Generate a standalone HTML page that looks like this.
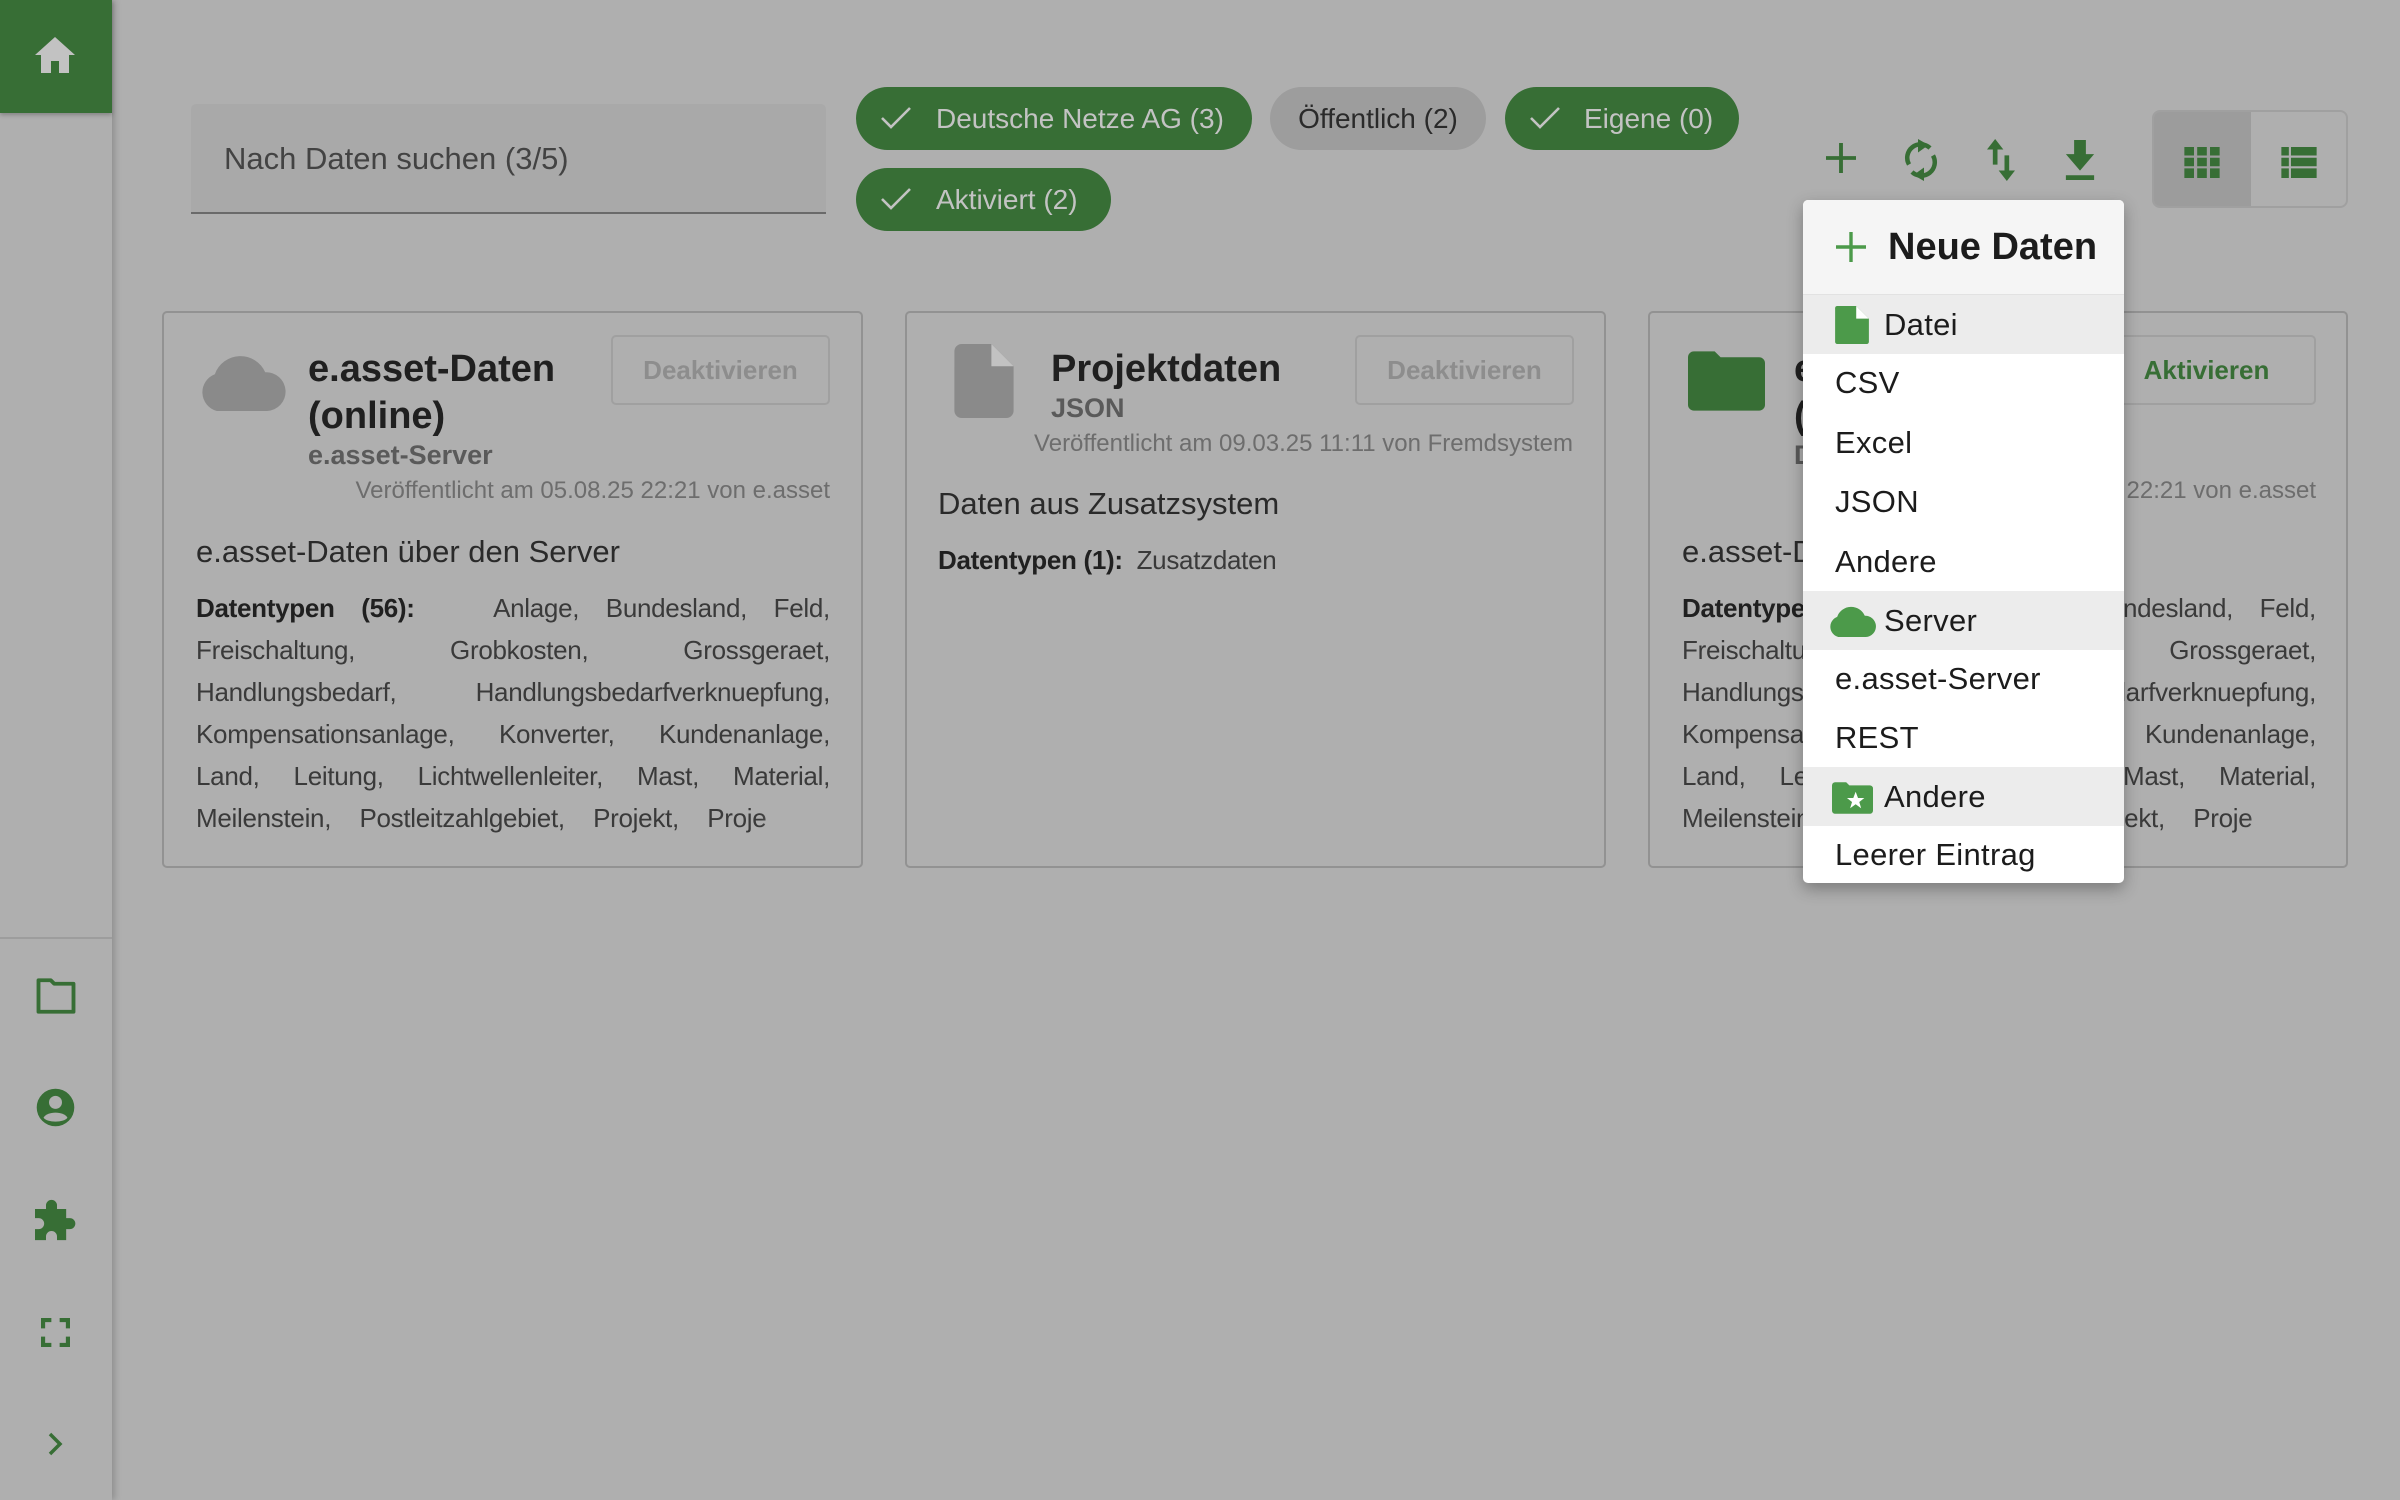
<!DOCTYPE html>
<html><head><meta charset="utf-8"><style>
*{margin:0;padding:0;box-sizing:border-box}
body{width:2400px;height:1500px;background:#afafaf;font-family:"Liberation Sans",sans-serif;position:relative;overflow:hidden;color:#1f1f1f}
.a{position:absolute}
.side{left:0;top:0;width:112px;height:1500px;background:#afafaf;box-shadow:3px 0 6px rgba(0,0,0,.18)}
.chip{position:absolute;height:63px;border-radius:32px;font-size:28px;line-height:63px;white-space:nowrap}
.g{background:#376e35;color:#c3c3c3}
.card{position:absolute;top:311px;height:557px;border:2px solid #929292;border-radius:5px}
.btn{position:absolute;border:2px solid #a0a0a0;border-radius:5px;font-size:26px;font-weight:bold;text-align:center;line-height:66px;height:70px;color:#8d8d8d}
.ttl{font-size:38px;font-weight:bold;color:#202020;line-height:47px}
.sub{font-size:27px;font-weight:bold;color:#5a5a5a}
.pub{font-size:24px;color:#6d6d6d;text-align:right;white-space:nowrap}
.desc{font-size:31px;color:#2a2a2a;white-space:nowrap}
.types{font-size:26px;color:#3a3a3a;line-height:42px;overflow:hidden;letter-spacing:-0.3px}
.types div{text-align:justify;text-align-last:justify;white-space:nowrap}
.menu{left:1803px;top:200px;width:321px;height:683px;background:#fff;border-radius:5px;box-shadow:0 6px 16px rgba(0,0,0,.3);overflow:hidden}
.mi{position:absolute;left:0;width:321px;height:59px;font-size:31px;line-height:59px;padding-left:32px;color:#1c1c1c;letter-spacing:0.3px}
.hl{background:#ececec;padding-left:81px}
</style></head><body>
<div class="a side"></div>
<div class="a" style="left:0;top:0;width:112px;height:113px;background:#376e35;box-shadow:0 2px 4px rgba(0,0,0,.25)">
<svg class="a" style="left:35px;top:37px" width="40" height="36" viewBox="0 0 20 18"><path d="M10 0 L20 9 H17 V18 H12 V12 H8 V18 H3 V9 H0 Z" fill="#c2c2c2"/></svg></div>
<div class="a" style="left:0;top:937px;width:112px;height:2px;background:#9d9d9d"></div>
<svg class="a" style="left:35px;top:978px" width="42" height="36" viewBox="0 0 24 20"><path d="M2 1 H9 L11 3 H22 V19 H2 Z" fill="none" stroke="#376e35" stroke-width="2.2" stroke-linejoin="round"/></svg>
<svg class="a" style="left:35px;top:1087px" width="41" height="41" viewBox="0 0 24 24"><circle cx="12" cy="12" r="11" fill="#376e35"/><circle cx="12" cy="9" r="3.8" fill="#afafaf"/><path d="M5 18 C7 14 17 14 19 18 C17 21 7 21 5 18Z" fill="#afafaf"/></svg>
<svg class="a" style="left:35px;top:1198px" width="44" height="44" viewBox="0 0 24 24"><path d="M0 6 H6 V4 A3 3 0 0 1 12 4 V6 H17 V11 H19 A2.8 2.8 0 0 1 19 17 H17 V23 H12 V21 A3 3 0 0 0 6 21 V23 H0 V17 H2 A2.8 2.8 0 0 0 2 11 H0 Z" fill="#376e35"/></svg>
<svg class="a" style="left:41px;top:1318px" width="29" height="29" viewBox="0 0 28 28"><path d="M2 10 V2 H10 M18 2 H26 V10 M26 18 V26 H18 M10 26 H2 V18" fill="none" stroke="#376e35" stroke-width="4"/></svg>
<svg class="a" style="left:48px;top:1432px" width="16" height="24" viewBox="0 0 16 24"><path d="M2 2 L12 12 L2 22" fill="none" stroke="#376e35" stroke-width="3.5"/></svg>

<div class="a" style="left:191px;top:104px;width:635px;height:110px;background:#a9a9a9;border-radius:5px 5px 0 0;border-bottom:2px solid #6a6a6a"></div>
<div class="a" style="left:224px;top:141px;font-size:31px;color:#434343">Nach Daten suchen (3/5)</div>

<div class="chip g" style="left:856px;top:87px;width:396px;padding-left:80px">Deutsche Netze AG (3)</div>
<div class="chip" style="left:1270px;top:87px;width:216px;background:#9d9d9d;color:#2a2a2a;text-align:center">Öffentlich (2)</div>
<div class="chip g" style="left:1505px;top:87px;width:234px;padding-left:79px">Eigene (0)</div>
<div class="chip g" style="left:856px;top:168px;width:255px;padding-left:80px">Aktiviert (2)</div>
<svg class="a" style="left:880px;top:106px" width="32" height="24" viewBox="0 0 32 24"><path d="M2 12 L11 21 L30 2" fill="none" stroke="#c3c3c3" stroke-width="2.6"/></svg>
<svg class="a" style="left:1529px;top:106px" width="32" height="24" viewBox="0 0 32 24"><path d="M2 12 L11 21 L30 2" fill="none" stroke="#c3c3c3" stroke-width="2.6"/></svg>
<svg class="a" style="left:880px;top:187px" width="32" height="24" viewBox="0 0 32 24"><path d="M2 12 L11 21 L30 2" fill="none" stroke="#c3c3c3" stroke-width="2.6"/></svg>

<svg class="a" style="left:1826px;top:143px" width="30" height="30" viewBox="0 0 28 28"><path d="M14 0 V28 M0 14 H28" stroke="#376e35" stroke-width="3.6"/></svg>
<svg class="a" style="left:1903px;top:136px" width="36" height="48" viewBox="0 0 24 32"><path d="M18 8 A9 9 0 0 0 4 19 M6 24 A9 9 0 0 0 20 13" fill="none" stroke="#376e35" stroke-width="3"/><path d="M10 2 L17 6 L10 11Z M14 30 L7 26 L14 21Z" fill="#376e35"/></svg>
<svg class="a" style="left:1986px;top:139px" width="30" height="42" viewBox="0 0 24 36"><path d="M7 0 L14 9 H9 V22 H5 V9 H0Z M17 36 L24 27 H19 V14 H15 V27 H10Z" fill="#376e35"/></svg>
<svg class="a" style="left:2065px;top:140px" width="30" height="40" viewBox="0 0 24 34"><path d="M7 0 H17 V12 H24 L12 26 L0 12 H7Z M0 30 H24 V34 H0Z" fill="#376e35"/></svg>

<div class="a" style="left:2152px;top:110px;width:196px;height:98px;border:2px solid #a0a0a0;border-radius:8px;overflow:hidden">
<div class="a" style="left:0;top:0;width:97px;height:96px;background:#9c9c9c"></div></div>
<svg class="a" style="left:2184px;top:147px" width="36" height="31" viewBox="0 0 33 29"><path fill="#376e35" d="M0 0h9v8H0zM12 0h9v8h-9zM24 0h9v8h-9zM0 10h9v8H0zM12 10h9v8h-9zM24 10h9v8h-9zM0 20h9v9H0zM12 20h9v9h-9zM24 20h9v9h-9z"/></svg>
<svg class="a" style="left:2281px;top:147px" width="36" height="31" viewBox="0 0 33 29"><path fill="#376e35" d="M0 0h7v8H0zM9 0h24v8H9zM0 10h7v8H0zM9 10h24v8H9zM0 20h7v9H0zM9 20h24v9H9z"/></svg>

<!-- card 1 -->
<div class="card" style="left:162px;width:701px"></div>
<svg class="a" style="left:196px;top:349px" width="90" height="62" viewBox="1 0 22.5 16"><path d="M6 16 A5 5 0 0 1 5.5 6.5 A7 7 0 0 1 18.5 6 A5 5 0 0 1 19 16Z" fill="#8a8a8a"/></svg>
<div class="a ttl" style="left:308px;top:346px">e.asset-Daten<br>(online)</div>
<div class="a sub" style="left:308px;top:440px">e.asset-Server</div>
<div class="btn" style="left:611px;top:335px;width:219px">Deaktivieren</div>
<div class="a pub" style="left:200px;top:477px;width:630px">Veröffentlicht am 05.08.25 22:21 von e.asset</div>
<div class="a desc" style="left:196px;top:534px">e.asset-Daten über den Server</div>
<div class="a types" style="left:196px;top:587px;width:634px;height:252px">
<div><b style="color:#202020">Datentypen (56):</b> &nbsp; Anlage, Bundesland, Feld,</div>
<div>Freischaltung, Grobkosten, Grossgeraet,</div>
<div>Handlungsbedarf, Handlungsbedarfverknuepfung,</div>
<div>Kompensationsanlage, Konverter, Kundenanlage,</div>
<div>Land, Leitung, Lichtwellenleiter, Mast, Material,</div>
<div>Meilenstein, Postleitzahlgebiet, Projekt, Proje&nbsp;&nbsp;&nbsp;</div>
</div>
<div class="a" style="left:760px;top:800px;width:72px;height:44px;background:linear-gradient(90deg,rgba(175,175,175,0),#afafaf 60%)"></div>

<!-- card 2 -->
<div class="card" style="left:905px;width:701px"></div>
<svg class="a" style="left:954px;top:344px" width="60" height="74" viewBox="0 0 16 20"><path d="M2 0 H10 L16 6 V18 A2 2 0 0 1 14 20 H2 A2 2 0 0 1 0 18 V2 A2 2 0 0 1 2 0Z" fill="#8a8a8a"/><path d="M10 0 V6 H16Z" fill="#c2c2c2"/></svg>
<div class="a ttl" style="left:1051px;top:346px">Projektdaten</div>
<div class="a sub" style="left:1051px;top:393px">JSON</div>
<div class="btn" style="left:1355px;top:335px;width:219px">Deaktivieren</div>
<div class="a pub" style="left:900px;top:430px;width:673px">Veröffentlicht am 09.03.25 11:11 von Fremdsystem</div>
<div class="a desc" style="left:938px;top:486px">Daten aus Zusatzsystem</div>
<div class="a types" style="left:938px;top:539px;white-space:nowrap"><b style="color:#202020">Datentypen (1):</b>&nbsp; Zusatzdaten</div>

<!-- card 3 -->
<div class="card" style="left:1648px;width:700px"></div>
<svg class="a" style="left:1688px;top:351px" width="77" height="60" viewBox="0 0 26 20"><path d="M2 0 H9 L11 2 H24 A2 2 0 0 1 26 4 V18 A2 2 0 0 1 24 20 H2 A2 2 0 0 1 0 18 V2 A2 2 0 0 1 2 0Z" fill="#376e35"/></svg>
<div class="a ttl" style="left:1794px;top:346px">e.asset-Daten<br>(online)</div>
<div class="a sub" style="left:1794px;top:440px">Datenbank</div>
<div class="btn" style="left:2097px;top:335px;width:219px;color:#376e35">Aktivieren</div>
<div class="a pub" style="left:1690px;top:477px;width:626px">Veröffentlicht am 05.08.25 22:21 von e.asset</div>
<div class="a desc" style="left:1682px;top:534px">e.asset-Daten über Verbindung</div>
<div class="a types" style="left:1682px;top:587px;width:634px;height:252px">
<div><b style="color:#202020">Datentypen (56):</b> &nbsp; Anlage, Bundesland, Feld,</div>
<div>Freischaltung, Grobkosten, Grossgeraet,</div>
<div>Handlungsbedarf, Handlungsbedarfverknuepfung,</div>
<div>Kompensationsanlage, Konverter, Kundenanlage,</div>
<div>Land, Leitung, Lichtwellenleiter, Mast, Material,</div>
<div>Meilenstein, Postleitzahlgebiet, Projekt, Proje&nbsp;&nbsp;&nbsp;</div>
</div>
<div class="a" style="left:2246px;top:800px;width:72px;height:44px;background:linear-gradient(90deg,rgba(175,175,175,0),#afafaf 60%)"></div>

<!-- menu -->
<div class="a menu">
<div class="a" style="left:0;top:0;width:321px;height:95px;background:#f5f5f5;border-bottom:1px solid #e2e2e2"></div>
<svg class="a" style="left:33px;top:32px" width="30" height="30" viewBox="0 0 30 30"><path d="M15 0 V30 M0 15 H30" stroke="#4c9a4a" stroke-width="3.4"/></svg>
<div class="a" style="left:85px;top:26px;font-size:38px;font-weight:bold;color:#1c1c1c;white-space:nowrap">Neue Daten</div>
<div class="mi hl" style="top:95px">Datei</div>
<svg class="a" style="left:32px;top:106px" width="34" height="38" viewBox="0 0 16 18"><path d="M1 0 H10 L16 6 V17 A1 1 0 0 1 15 18 H1 A1 1 0 0 1 0 17 V1 A1 1 0 0 1 1 0Z" fill="#4c9a4a"/><path d="M10 0 V6 H16Z" fill="#fff"/></svg>
<div class="mi" style="top:153px">CSV</div>
<div class="mi" style="top:213px">Excel</div>
<div class="mi" style="top:272px">JSON</div>
<div class="mi" style="top:332px">Andere</div>
<div class="mi hl" style="top:391px">Server</div>
<svg class="a" style="left:24px;top:403px" width="49" height="34" viewBox="1 0 22.5 16"><path d="M6 16 A5 5 0 0 1 5.5 6.5 A7 7 0 0 1 18.5 6 A5 5 0 0 1 19 16Z" fill="#4c9a4a"/></svg>
<div class="mi" style="top:449px">e.asset-Server</div>
<div class="mi" style="top:508px">REST</div>
<div class="mi hl" style="top:567px">Andere</div>
<svg class="a" style="left:29px;top:582px" width="41" height="32" viewBox="0 0 26 20"><path d="M2 0 H9 L11 2 H24 A2 2 0 0 1 26 4 V18 A2 2 0 0 1 24 20 H2 A2 2 0 0 1 0 18 V2 A2 2 0 0 1 2 0Z" fill="#4c9a4a"/><path d="M15 6 L16.5 10 H20.5 L17.3 12.5 L18.5 16.5 L15 14 L11.5 16.5 L12.7 12.5 L9.5 10 H13.5Z" fill="#fff"/></svg>
<div class="mi" style="top:625px">Leerer Eintrag</div>
</div>
</body></html>
